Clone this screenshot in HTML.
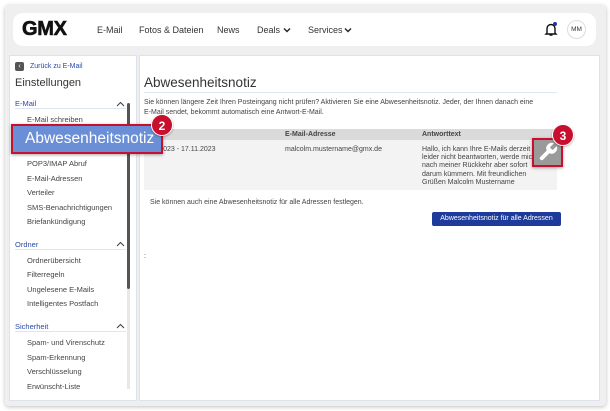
<!DOCTYPE html>
<html><head><meta charset="utf-8"><style>
*{margin:0;padding:0;box-sizing:border-box}
body{width:610px;height:411px;background:#fff;font-family:"Liberation Sans",sans-serif;position:relative;overflow:hidden;color:#333}
.a{position:absolute;white-space:nowrap}
.frame{left:5px;top:5px;width:601px;height:401px;background:#efefef;border-radius:4px;box-shadow:0 1px 4px rgba(0,0,0,.25)}
.hdr{left:13px;top:13px;width:583px;height:33px;background:#fff;border-radius:10px}
.nav{font-size:9px;color:#333;top:25px}
.side{left:9px;top:55px;width:128px;height:346px;background:#fff;border:1px solid #dde3ee}
.main{left:139px;top:55px;width:461px;height:346px;background:#fff;border:1px solid #dde3ee}
.si{font-size:7.5px;color:#444;left:27px}
.sh{font-size:7.5px;color:#2a48a8;left:15px}
.ln{height:1px;background:#dfe5f0;left:15px;width:111px}
.car{left:116px}
.badge{width:22px;height:22px;border-radius:50%;background:#c8102e;color:#fff;font-weight:bold;font-size:12px;text-align:center;line-height:22px;border:1px solid #fff;box-shadow:0 1px 2px rgba(0,0,0,.3)}
.t{font-size:7px;color:#444}
</style></head><body>
<div class="a frame"></div>
<div class="a hdr"></div>
<div class="a" style="left:22px;top:18px;font-size:20px;font-weight:900;letter-spacing:-0.3px;color:#111;-webkit-text-stroke:0.6px #111">GMX</div>
<div class="a nav" style="left:97px">E-Mail</div>
<div class="a nav" style="left:139px">Fotos &amp; Dateien</div>
<div class="a nav" style="left:217px">News</div>
<div class="a nav" style="left:257px">Deals</div>
<svg class="a" style="left:283px;top:27px" width="8" height="6" viewBox="0 0 8 6"><path d="M1 1.5l3 3 3-3" fill="none" stroke="#222" stroke-width="1.4"/></svg>
<div class="a nav" style="left:308px">Services</div>
<svg class="a" style="left:344px;top:27px" width="8" height="6" viewBox="0 0 8 6"><path d="M1 1.5l3 3 3-3" fill="none" stroke="#222" stroke-width="1.4"/></svg>
<svg class="a" style="left:544px;top:22px" width="14" height="15" viewBox="0 0 14 15"><path d="M3 11V6.5a4 4 0 0 1 8 0V11l1 1H2z M5.5 13h3" fill="none" stroke="#111" stroke-width="1.4"/><circle cx="11" cy="2" r="2" fill="#1c3aa0"/></svg>
<div class="a" style="left:567px;top:20px;width:19px;height:19px;border:1px solid #ddd;border-radius:50%;font-size:6.5px;text-align:center;line-height:17px;color:#333">MM</div>

<div class="a side"></div>
<div class="a" style="left:15px;top:62px;width:9px;height:9px;background:#555;border-radius:2px;color:#fff;font-size:7px;line-height:9px;text-align:center">‹</div>
<div class="a" style="left:30px;top:63px;font-size:7px;color:#2a48a8">Zurück zu E-Mail</div>
<div class="a" style="left:15px;top:77px;font-size:11px;color:#333">Einstellungen</div>
<div class="a sh" style="top:99px">E-Mail</div><svg class="a car" style="top:101px" width="9" height="6" viewBox="0 0 9 6"><path d="M1 5l3.5-3.5L8 5" fill="none" stroke="#444" stroke-width="1.1"/></svg><div class="a ln" style="top:108px"></div>
<div class="a si" style="top:115px">E-Mail schreiben</div>
<div class="a si" style="top:159px">POP3/IMAP Abruf</div>
<div class="a si" style="top:174px">E-Mail-Adressen</div>
<div class="a si" style="top:188px">Verteiler</div>
<div class="a si" style="top:203px">SMS-Benachrichtigungen</div>
<div class="a si" style="top:217px">Briefankündigung</div>
<div class="a sh" style="top:240px">Ordner</div><svg class="a car" style="top:241px" width="9" height="6" viewBox="0 0 9 6"><path d="M1 5l3.5-3.5L8 5" fill="none" stroke="#444" stroke-width="1.1"/></svg><div class="a ln" style="top:249px"></div>
<div class="a si" style="top:256px">Ordnerübersicht</div>
<div class="a si" style="top:270px">Filterregeln</div>
<div class="a si" style="top:285px">Ungelesene E-Mails</div>
<div class="a si" style="top:299px">Intelligentes Postfach</div>
<div class="a sh" style="top:322px">Sicherheit</div><svg class="a car" style="top:323px" width="9" height="6" viewBox="0 0 9 6"><path d="M1 5l3.5-3.5L8 5" fill="none" stroke="#444" stroke-width="1.1"/></svg><div class="a ln" style="top:331px"></div>
<div class="a si" style="top:338px">Spam- und Virenschutz</div>
<div class="a si" style="top:353px">Spam-Erkennung</div>
<div class="a si" style="top:367px">Verschlüsselung</div>
<div class="a si" style="top:382px">Erwünscht-Liste</div>
<div class="a" style="left:127px;top:103px;width:3px;height:186px;background:#555;border-radius:2px"></div>
<div class="a" style="left:127px;top:289px;width:3px;height:100px;background:#e8e8e8"></div>

<div class="a main"></div>
<div class="a" style="left:144px;top:75px;font-size:13.5px;color:#333">Abwesenheitsnotiz</div>
<div class="a" style="left:144px;top:92px;width:413px;height:1px;background:#dfe5f0"></div>
<div class="a t" style="left:144px;top:99px">Sie können längere Zeit Ihren Posteingang nicht prüfen? Aktivieren Sie eine Abwesenheitsnotiz. Jeder, der Ihnen danach eine</div>
<div class="a t" style="left:144px;top:109px">E-Mail sendet, bekommt automatisch eine Antwort-E-Mail.</div>
<div class="a" style="left:144px;top:129px;width:413px;height:11px;background:#dadada"></div>
<div class="a" style="left:144px;top:140px;width:413px;height:50px;background:#f3f3f3"></div>
<div class="a t" style="left:285px;top:131px;font-weight:bold">E-Mail-Adresse</div>
<div class="a t" style="left:422px;top:131px;font-weight:bold">Antworttext</div>
<div class="a t" style="left:150px;top:146px">11.2023 - 17.11.2023</div>
<div class="a t" style="left:285px;top:146px">malcolm.mustername@gmx.de</div>
<div class="a t" style="left:422px;top:146px;line-height:8.2px">Hallo, ich kann Ihre E-Mails derzeit<br>leider nicht beantworten, werde mich<br>nach meiner Rückkehr aber sofort<br>darum kümmern. Mit freundlichen<br>Grüßen Malcolm Mustername</div>
<div class="a t" style="left:150px;top:199px">Sie können auch eine Abwesenheitsnotiz für alle Adressen festlegen.</div>
<div class="a" style="left:432px;top:212px;width:129px;height:14px;background:#1e3a9a;border-radius:2px;color:#fff;font-size:7px;text-align:center;line-height:14px">Abwesenheitsnotiz für alle Adressen</div>
<div class="a t" style="left:144px;top:253px">:</div>

<div class="a" style="left:11px;top:124px;width:152px;height:30px;background:#6a8fd6;border:2px solid #c8102e;box-shadow:0 1px 3px rgba(0,0,0,.35);color:#fff;font-size:15.5px;line-height:26px;padding-left:12px">Abwesenheitsnotiz</div>
<div class="a badge" style="left:151px;top:114px">2</div>

<div class="a" style="left:532px;top:138px;width:31px;height:29px;background:#9a9a9a;border:2px solid #c8102e;box-shadow:0 1px 3px rgba(0,0,0,.35)"></div>
<svg class="a" style="left:537px;top:141px" width="22" height="22" viewBox="0 0 24 24"><path d="M14.7 6.3a1 1 0 0 0 0 1.4l1.6 1.6a1 1 0 0 0 1.4 0l3.8-3.8a6 6 0 0 1-7.9 7.9l-6.9 6.9a2.1 2.1 0 0 1-3-3l6.9-6.9a6 6 0 0 1 7.9-7.9z" fill="#fff"/></svg>
<div class="a badge" style="left:552px;top:124px">3</div>
</body></html>
